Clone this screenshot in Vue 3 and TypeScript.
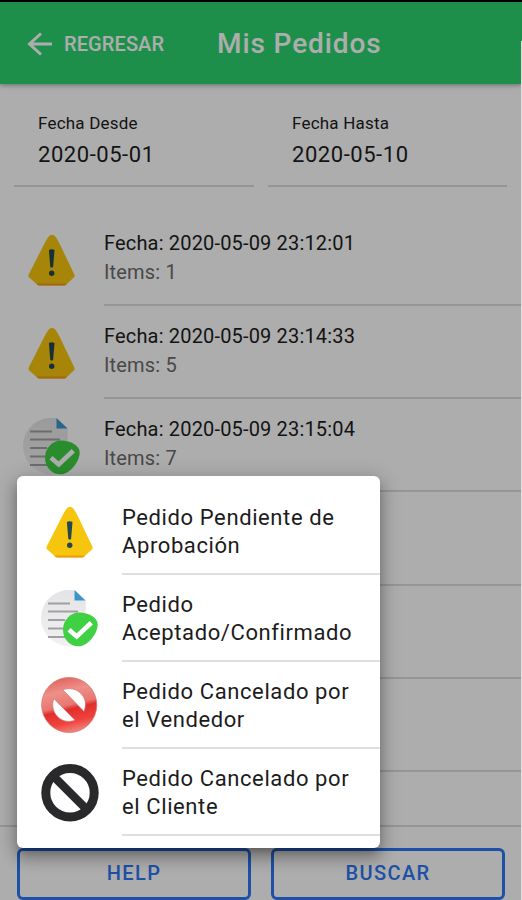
<script setup lang="ts">
interface Order {
  date: string
  items: number
  status: 'pending' | 'accepted'
}
interface Legend {
  lines: string[]
  status: 'pending' | 'accepted' | 'seller' | 'client'
}

const filters = [
  { label: 'Fecha Desde', value: '2020-05-01' },
  { label: 'Fecha Hasta', value: '2020-05-10' },
]
const orders: Order[] = [
  { date: '2020-05-09 23:12:01', items: 1, status: 'pending' },
  { date: '2020-05-09 23:14:33', items: 5, status: 'pending' },
  { date: '2020-05-09 23:15:04', items: 7, status: 'accepted' },
]
const legend: Legend[] = [
  { lines: ['Pedido Pendiente de', 'Aprobación'], status: 'pending' },
  { lines: ['Pedido', 'Aceptado/Confirmado'], status: 'accepted' },
  { lines: ['Pedido Cancelado por', 'el Vendedor'], status: 'seller' },
  { lines: ['Pedido Cancelado por', 'el Cliente'], status: 'client' },
]
</script>

<template>
  <div class="screen">
    <svg class="defs" width="0" height="0" aria-hidden="true">
      <defs>
        <linearGradient id="paper" x1="0" y1="0" x2="0" y2="1">
          <stop offset="0" stop-color="#e4e4e6" />
          <stop offset="1" stop-color="#f1f1f2" />
        </linearGradient>
        <linearGradient id="red" x1="0.36" y1="0" x2="0.6" y2="1">
          <stop offset="0" stop-color="#e0645c" />
          <stop offset="0.25" stop-color="#ee908a" />
          <stop offset="0.5" stop-color="#e97670" />
          <stop offset="0.58" stop-color="#e02e2c" />
          <stop offset="0.8" stop-color="#f0423d" />
          <stop offset="1" stop-color="#f08a86" />
        </linearGradient>
        <symbol id="pending" viewBox="0 0 58 58">
          <path d="M25.700 5.600Q29 1.800 32.300 5.600Q34 8 36 11.500L51.300 43.500Q52.200 45.200 50.800 46.500L43.300 53.400Q42.300 54.400 41 54.400H16.500Q15.200 54.400 14.200 53.400L6.200 46.500Q4.800 45.200 5.700 43.500L22 11.500Q24 8 25.700 5.600Z" fill="#f6c50d" />
          <path d="M13.300 52.600H44.100L43.300 53.400Q42.300 54.400 41 54.400H16.500Q15.200 54.400 14.200 53.400Z" fill="#f19a18" />
          <path d="M25.900 19Q28.700 17.700 31.500 19L30.100 36Q28.700 37.200 27.300 36Z" fill="#214851" />
          <circle cx="28.700" cy="42.300" r="2.700" fill="#214851" />
        </symbol>
        <symbol id="accepted" viewBox="0 0 58 58">
          <path d="M33.500 .3A28.200 28.200 0 1 0 33.500 55.700L44.700 46V10.500Z" fill="url(#paper)" />
          <path d="M33.500 0L44.500 10.500H33.500Z" fill="#3c95c9" />
          <path d="M7 13.600H29M7 21.600H37M7 30H24M7 38.600H24M7 47H24" stroke="#a0a0a2" stroke-width="2" />
          <path d="M38 22.500C48 22.800 56.700 27.500 56.700 34.500C56.700 43.500 47 56.300 37.500 56.300C28 56.300 22 48.500 22 39.500C22 30.500 29 22.500 38 22.500Z" fill="#3fd043" />
          <path d="M28 39.800L35.700 46.500L50.300 32.800" fill="none" stroke="#fff" stroke-width="4.600" />
        </symbol>
        <symbol id="seller" viewBox="0 0 58 58">
          <path fill="url(#red)" stroke="#d0716d" stroke-width=".7" fill-rule="evenodd" d="M28.200 .4A27.600 27.600 0 1 1 28.200 55.600A27.600 27.600 0 1 1 28.200 .400ZM21.800 12.800L43 34.500C49 21 36 7.500 21.800 12.800ZM12.800 21.500C8 35 20 48.500 34 43.300Z" />
        </symbol>
        <symbol id="client" viewBox="0 0 58 58">
          <circle cx="29" cy="28.700" r="24.200" fill="none" stroke="#29292b" stroke-width="9" />
          <path d="M13 12.700L45 44.700" stroke="#29292b" stroke-width="8.300" />
        </symbol>
      </defs>
    </svg>

    <div class="page">
      <header class="toolbar">
        <svg class="back" viewBox="0 0 26 24"><path d="M14 1.500L2.500 12L14 22.500M2.500 12H25" /></svg>
        <span class="back-text">REGRESAR</span>
        <h1>Mis Pedidos</h1>
      </header>

      <section class="filters">
        <div v-for="f in filters" :key="f.label" class="filter">
          <span class="label">{{ f.label }}</span>
          <span class="value">{{ f.value }}</span>
        </div>
      </section>

      <main class="orders">
        <article v-for="o in orders" :key="o.date" class="order">
          <svg class="icon"><use :href="'#' + o.status" /></svg>
          <div class="info">
            <span class="date">Fecha: {{ o.date }}</span>
            <span class="items">Items: {{ o.items }}</span>
          </div>
        </article>
        <article v-for="n in 4" :key="n" class="order">
          <div class="icon"></div>
          <div class="info"></div>
        </article>
      </main>

      <footer class="actions">
        <button type="button">HELP</button>
        <button type="button">BUSCAR</button>
      </footer>
    </div>

    <div class="backdrop"></div>
    <div class="edge"></div>

    <aside class="popover">
      <div v-for="(l, i) in legend" :key="i" class="entry">
        <svg class="icon"><use :href="'#' + l.status" /></svg>
        <div class="text">
          <span v-for="line in l.lines" :key="line">{{ line }}</span>
        </div>
      </div>
    </aside>
  </div>
</template>

<style>
body {
  margin: 0;
}
</style>

<style scoped>
.screen {
  position: relative;
  width: 522px;
  height: 900px;
  overflow: hidden;
  font-family: Roboto, sans-serif;
  color: #1c1c1c;
}
.defs {
  position: absolute;
}
.page {
  display: flex;
  flex-direction: column;
  height: 900px;
  background: #fff;
}
.toolbar {
  box-sizing: border-box;
  display: flex;
  align-items: center;
  flex: none;
  height: 84px;
  padding: 2px 0 0 27px;
  border-top: 2px solid #000;
  background: #2dd36f;
  color: #fff;
  box-shadow: 0 1px 5px rgba(0, 0, 0, 0.4);
}
.back {
  width: 26px;
  height: 24px;
  fill: none;
  stroke: #fff;
  stroke-width: 3;
}
.back-text {
  width: 153px;
  margin-left: 11px;
  font-size: 20px;
  font-weight: 500;
  letter-spacing: 0.1px;
  white-space: nowrap;
}
h1 {
  margin: 0;
  font-size: 28px;
  font-weight: 500;
  letter-spacing: 0.9px;
  line-height: 34px;
}
.filters {
  display: grid;
  grid-template-columns: 240px 239px;
  gap: 14px;
  flex: none;
  height: 103px;
  padding-left: 14px;
}
.filter {
  box-sizing: border-box;
  display: flex;
  flex-direction: column;
  padding: 27px 0 0 24px;
  border-bottom: 2px solid #dcdcdc;
}
.label {
  font-size: 17px;
  line-height: 24px;
  letter-spacing: 0.2px;
}
.value {
  margin-top: 5px;
  font-size: 22px;
  line-height: 30px;
  letter-spacing: 0.55px;
}
.orders {
  flex: 1;
  min-height: 0;
  padding-top: 25.5px;
  overflow: hidden;
}
.order {
  display: flex;
  height: 93.3px;
}
.order .icon {
  flex: none;
  width: 58px;
  height: 58px;
  margin: 18.5px 23px 0 23px;
}
.info {
  box-sizing: border-box;
  display: flex;
  flex-direction: column;
  flex: 1;
  padding-top: 16px;
  border-bottom: 2px solid #dcdcdc;
}
.date,
.items {
  font-size: 20px;
  line-height: 29px;
  letter-spacing: 0.17px;
}
.items {
  color: #6c6c6c;
}
.actions {
  box-sizing: border-box;
  display: grid;
  grid-template-columns: 234px 234px;
  gap: 20px;
  flex: none;
  height: 75px;
  padding: 21px 0 0 17px;
  border-top: 2px solid #dcdcdc;
  background: #fff;
}
button {
  box-sizing: border-box;
  height: 52px;
  padding: 0 0 2px;
  border: 3px solid #2c76f5;
  border-radius: 6px;
  background: transparent;
  color: #2c76f5;
  font: 500 20px/44px Roboto, sans-serif;
  letter-spacing: 1.4px;
}
.backdrop {
  position: absolute;
  inset: 0;
  background: rgba(0, 0, 0, 0.32);
}
.edge {
  position: absolute;
  top: 41px;
  right: 0;
  bottom: 0;
  width: 1px;
  background: #dedede;
}
.popover {
  position: absolute;
  top: 476px;
  left: 17px;
  box-sizing: border-box;
  width: 363px;
  height: 372px;
  padding-top: 12px;
  border-radius: 6px;
  background: #fff;
  box-shadow: 0 6px 7px -4px rgba(0, 0, 0, 0.25), 0 10px 14px 1px rgba(0, 0, 0, 0.2), 0 4px 20px 3px rgba(0, 0, 0, 0.18);
}
.entry {
  display: flex;
  height: 87.1px;
}
.entry .icon {
  flex: none;
  width: 58px;
  height: 58px;
  margin: 14.5px 23px 0 24px;
}
.text {
  box-sizing: border-box;
  display: flex;
  flex-direction: column;
  flex: 1;
  padding-top: 16px;
  border-bottom: 2px solid #dfdfdf;
  font-size: 22px;
  line-height: 27.5px;
  letter-spacing: 0.6px;
  white-space: nowrap;
}
</style>
